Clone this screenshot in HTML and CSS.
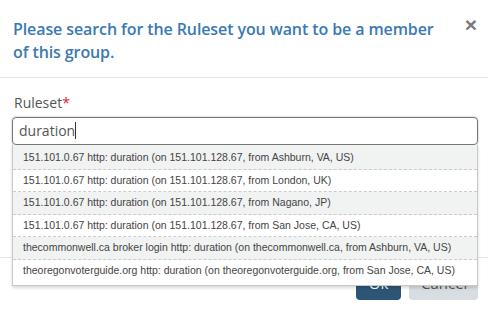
FILE: index.html
```html
<!DOCTYPE html>
<html lang="en">
<head>
    <meta charset="UTF-8">
    <title>Ruleset search</title>
    <link rel="stylesheet" href="styles.css">
</head>
<body>
    <div class="modal">
        <div class="modal-header">
            <h4 class="modal-title">Please search for the Ruleset you want to be a member of this group.</h4>
            <span class="close">&times;</span>
        </div>

        <div class="modal-body">
            <label class="field-label">Ruleset<span class="required">*</span></label>
            <div class="search-box">
                <div class="search-input">duration<span class="caret"></span></div>
                <ul class="results">
                    <li>151.101.0.67 http: duration (on 151.101.128.67, from Ashburn, VA, US)</li>
                    <li>151.101.0.67 http: duration (on 151.101.128.67, from London, UK)</li>
                    <li>151.101.0.67 http: duration (on 151.101.128.67, from Nagano, JP)</li>
                    <li>151.101.0.67 http: duration (on 151.101.128.67, from San Jose, CA, US)</li>
                    <li>thecommonwell.ca broker login http: duration (on thecommonwell.ca, from Ashburn, VA, US)</li>
                    <li>theoregonvoterguide.org http: duration (on theoregonvoterguide.org, from San Jose, CA, US)</li>
                </ul>
            </div>
        </div>

        <div class="modal-footer">
            <button class="btn btn-primary">Ok</button>
            <button class="btn btn-default">Cancel</button>
        </div>
    </div>
</body>
</html>
```

FILE: styles.css
```css
body {
    margin: 0;
    background: #fff;
    font-family: "Open Sans", Arial, sans-serif;
    overflow: hidden;
}
.modal {
    width: 488px;
}
.modal-header {
    display: flex;
    align-items: flex-start;
    padding: 18px 11px 13px 13px;
    border-bottom: 1px solid #e5e5e5;
}
.modal-title {
    flex: 1;
    margin: 0;
    font-size: 16px;
    line-height: 23px;
    font-weight: 600;
    letter-spacing: -0.1px;
    color: #3a79b2;
}
.close {
    font-family: "Liberation Sans", Arial, sans-serif;
    font-size: 21px;
    font-weight: bold;
    line-height: 21px;
    color: #7a7a7a;
    margin-top: -4px;
    margin-left: 24px;
}
.modal-body {
    padding: 15px 10px 112px 12px;
}
.field-label {
    display: block;
    font-size: 14px;
    line-height: 20px;
    color: #555;
    padding-left: 2px;
    margin-bottom: 4px;
}
.required { color: #e02020; }
.search-box {
    position: relative;
}
.search-input {
    height: 26px;
    border: 1px solid #777;
    border-radius: 4px;
    box-shadow: 0 0 2px rgba(0,0,0,0.35);
    padding: 0 6px;
    font-size: 14px;
    line-height: 26px;
    color: #555;
}
.caret {
    display: inline-block;
    width: 1px;
    height: 17px;
    background: #333;
    vertical-align: -3px;
}
.results {
    position: absolute;
    top: 28px;
    left: 0;
    right: 0;
    margin: 0;
    padding: 0;
    list-style: none;
    background: #fff;
    border: 1px solid #c8c8c8;
    border-top: none;
    box-shadow: 0 2px 3px rgba(0,0,0,0.15);
    z-index: 2;
}
.results li {
    height: 21.6px;
    line-height: 21.6px;
    padding-left: 10px;
    font-family: "Liberation Sans", Arial, sans-serif;
    font-size: 10.5px;
    color: #444;
    border-bottom: 1px dashed #ccc;
    white-space: nowrap;
}
.results li:first-child {
    padding-top: 2px;
}
.results li:last-child {
    border-bottom: none;
    padding-bottom: 3px;
}
.results li:nth-child(odd) { background: #f1f2f2; }
.modal-footer {
    display: flex;
    justify-content: flex-end;
    gap: 8px;
    padding: 8px 10px 12px;
    border-top: 1px solid #e5e5e5;
}
.btn {
    height: 34px;
    border: none;
    border-radius: 4px;
    font-family: "Open Sans", Arial, sans-serif;
    font-size: 15px;
    padding: 0 12px;
}
.btn-primary {
    width: 45px;
    background: #2d5676;
    color: #fff;
}
.btn-default {
    width: 69px;
    background: #d8dde1;
    color: #555;
}
```
